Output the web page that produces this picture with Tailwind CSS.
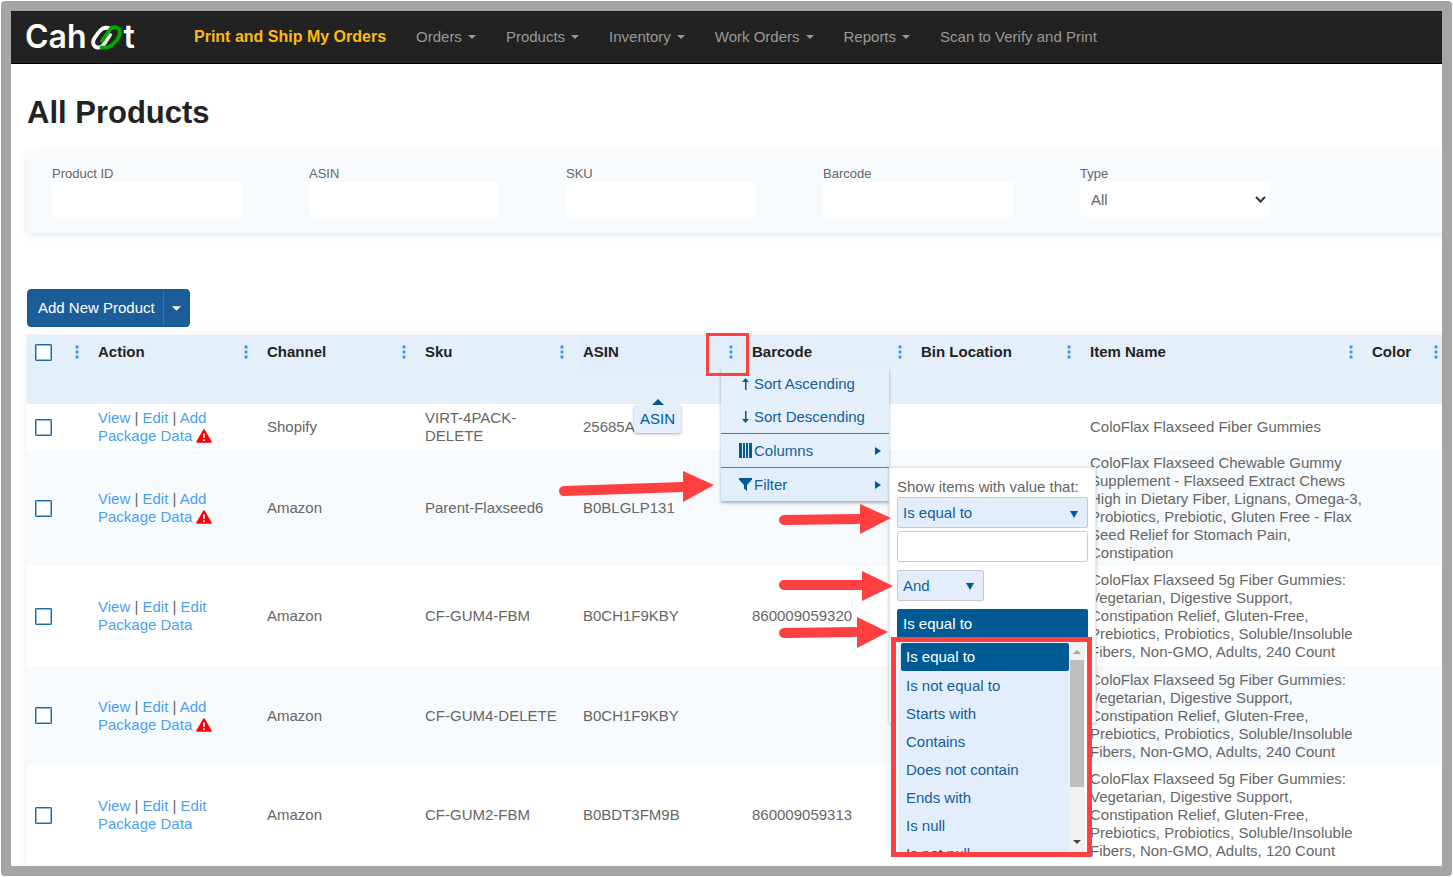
<!DOCTYPE html>
<html lang="en">
<head>
  <meta charset="UTF-8" />
  <meta name="viewport" content="width=device-width, initial-scale=1.0"/>
  <title>All Products - Cahoot</title>
  <script src="https://cdn.jsdelivr.net/npm/@tailwindcss/browser@4"></script>
</head>
<body class="bg-white p-px font-['Liberation_Sans',Arial,sans-serif] text-[15px] leading-[18px] text-[#666]">

<!-- icons used more than once -->
<svg class="hidden">
  <symbol id="dots" viewBox="0 0 4 14"><circle cx="2" cy="2" r="1.7"/><circle cx="2" cy="7" r="1.7"/><circle cx="2" cy="12" r="1.7"/></symbol>
  <symbol id="caret" viewBox="0 0 8 4"><path d="M0 0h8L4 4z"/></symbol>
  <symbol id="warn" viewBox="0 0 16 14"><path d="M8 1 15 13H1z" fill="#f00" stroke="#f00" stroke-width="1.5" stroke-linejoin="round"/><path d="M8 4.5v4.2M8 10.3v1.7" stroke="#fff" stroke-width="1.8"/></symbol>
</svg>

<div class="overflow-hidden rounded-[4px] border-[10px] border-[#a5a5a5]">

  <!-- top bar -->
  <nav class="flex h-[53px] items-center border-b border-black bg-[#222] pl-[14px] text-[#999]">
    <a href="#" class="flex w-[169px] shrink-0 items-center font-['Inter',sans-serif] text-[32px] leading-[40px] font-semibold text-white" aria-label="Cahoot">
      <span>Cah</span>
      <svg class="mr-[2px] ml-1 h-[25px] w-[31px]" viewBox="0 0 31 25" fill="none" stroke-width="3.8" stroke-linecap="round">
        <path d="M19 3.500C14 1.500 10.500 3.500 8 7L3.500 13C0 19 4 23 8 22.500C12 22 13 19 19 10" stroke="#fff"/>
        <path d="M11 16L18 6C20 2 25 1 28 4C30.500 8 28 12 26 15L21 20C18 23 14 23 10.500 22.500" stroke="#0a0"/>
      </svg>
      <span>t</span>
    </a>
    <div class="flex items-center gap-[30px] whitespace-nowrap">
      <a href="#" class="text-[16px] font-bold text-[#fdb913]">Print and Ship My Orders</a>
      <a href="#" class="flex items-center gap-[6px]">Orders <svg class="h-1 w-2 fill-current"><use href="#caret"/></svg></a>
      <a href="#" class="flex items-center gap-[6px]">Products <svg class="h-1 w-2 fill-current"><use href="#caret"/></svg></a>
      <a href="#" class="flex items-center gap-[6px]">Inventory <svg class="h-1 w-2 fill-current"><use href="#caret"/></svg></a>
      <a href="#" class="flex items-center gap-[6px]">Work Orders <svg class="h-1 w-2 fill-current"><use href="#caret"/></svg></a>
      <a href="#" class="flex items-center gap-[6px]">Reports <svg class="h-1 w-2 fill-current"><use href="#caret"/></svg></a>
      <a href="#">Scan to Verify and Print</a>
    </div>
  </nav>

  <main class="pb-px pl-4">
    <h1 class="pt-[29px] text-[31px] leading-[40px] font-bold text-[#222]">All Products</h1>

    <!-- search fields -->
    <form class="-mr-4 mt-[19px] flex gap-[67px] rounded-[4px] bg-[#f6fafd] pt-[14px] pb-4 pl-[25px] text-[13px] leading-4 shadow-[0_2px_8px_rgba(0,0,0,0.1)]">
      <div class="w-[190px]"><label for="pid" class="block">Product ID</label><input id="pid" class="block h-[35px] w-full rounded-[4px] bg-white px-3"></div>
      <div class="w-[190px]"><label for="asin" class="block">ASIN</label><input id="asin" class="block h-[35px] w-full rounded-[4px] bg-white px-3"></div>
      <div class="w-[190px]"><label for="sku" class="block">SKU</label><input id="sku" class="block h-[35px] w-full rounded-[4px] bg-white px-3"></div>
      <div class="w-[190px]"><label for="barcode" class="block">Barcode</label><input id="barcode" class="block h-[35px] w-full rounded-[4px] bg-white px-3"></div>
      <div class="relative w-[190px]"><label for="type" class="block">Type</label>
        <select id="type" class="block h-[35px] w-full appearance-none rounded-[4px] bg-white px-[11px] text-[15px]"><option>All</option></select>
        <svg class="pointer-events-none absolute right-1 bottom-[14px] h-[7px] w-[11px]" viewBox="0 0 11 7" fill="none" stroke="#333" stroke-width="2"><path d="M1 1l4.500 4.500L10 1"/></svg>
      </div>
    </form>

    <div class="mt-14 flex h-[38px] w-fit overflow-hidden rounded-[4px] border border-[#1a5796] bg-[#1b5c99] text-white">
      <button class="pr-2 pl-[10px]">Add New Product</button>
      <button class="flex w-[26px] items-center justify-center border-l border-[#3672a8]" aria-label="More"><svg class="h-[5px] w-[9px] fill-current"><use href="#caret"/></svg></button>
    </div>

    <div class="relative mt-2 shadow-[0_0_10px_rgba(0,0,0,0.08)]">
      <table class="w-full min-w-[1426px] table-fixed text-left [&_td]:py-1 [&_td]:pl-1">
        <colgroup>
          <col class="w-[67px]"><col class="w-[169px]"><col class="w-[158px]"><col class="w-[158px]"><col class="w-[169px]"><col class="w-[169px]"><col class="w-[169px]"><col class="w-[282px]"><col>
        </colgroup>
        <thead>
          <tr class="h-[69px] bg-[#e5effa] align-top text-[#222] [&_svg]:h-[14px] [&_svg]:w-1 [&_svg]:fill-[#3b99fc] [&_th>div]:flex [&_th>div]:h-[34px] [&_th>div]:items-center [&_th>div]:justify-between [&_th>div]:pr-[15px] [&_th>div]:pl-1">
            <th><div><input type="checkbox" aria-label="Select all" class="ml-1 size-[17px] appearance-none rounded-[1px] border-[1px] border-[#1b6ba3] bg-white shadow-[inset_0_0_0_1px_#8fb9d6]"><button aria-label="Column menu"><svg><use href="#dots"/></svg></button></div></th>
            <th><div>Action<button aria-label="Column menu"><svg><use href="#dots"/></svg></button></div></th>
            <th><div>Channel<button aria-label="Column menu"><svg><use href="#dots"/></svg></button></div></th>
            <th><div>Sku<button aria-label="Column menu"><svg><use href="#dots"/></svg></button></div></th>
            <th><div class="bg-[#e2edfb]">ASIN<button aria-label="Column menu"><svg><use href="#dots"/></svg></button></div></th>
            <th><div>Barcode<button aria-label="Column menu"><svg><use href="#dots"/></svg></button></div></th>
            <th><div>Bin Location<button aria-label="Column menu"><svg><use href="#dots"/></svg></button></div></th>
            <th><div>Item Name<button aria-label="Column menu"><svg><use href="#dots"/></svg></button></div></th>
            <th><div>Color<button aria-label="Column menu"><svg><use href="#dots"/></svg></button></div></th>
          </tr>
        </thead>
        <tbody class="[&_a]:text-[#4a9ff5] [&_input]:ml-1 [&_input]:block [&_input]:size-[17px] [&_input]:appearance-none [&_input]:rounded-[1px] [&_input]:border [&_input]:border-[#1b6ba3] [&_input]:bg-white [&_input]:shadow-[inset_0_0_0_1px_#8fb9d6] [&_svg]:inline [&_svg]:h-[14px] [&_svg]:w-4 [&_svg]:align-[-2px]">
          <tr class="h-[46px]">
            <td><input type="checkbox" aria-label="Select row"></td>
            <td><a href="#">View</a> | <a href="#">Edit</a> | <a href="#">Add<br>Package Data</a> <svg><use href="#warn"/></svg></td>
            <td>Shopify</td><td>VIRT-4PACK-<br>DELETE</td><td>25685A7</td><td></td><td></td>
            <td>ColoFlax Flaxseed Fiber Gummies</td><td></td>
          </tr>
          <tr class="h-[116px] bg-[#f6fafd]">
            <td><input type="checkbox" aria-label="Select row"></td>
            <td><a href="#">View</a> | <a href="#">Edit</a> | <a href="#">Add<br>Package Data</a> <svg><use href="#warn"/></svg></td>
            <td>Amazon</td><td>Parent-Flaxseed6</td><td>B0BLGLP131</td><td></td><td></td>
            <td>ColoFlax Flaxseed Chewable Gummy Supplement - Flaxseed Extract Chews High in Dietary Fiber, Lignans, Omega-3, Probiotics, Prebiotic, Gluten Free - Flax Seed Relief for Stomach Pain, Constipation</td><td></td>
          </tr>
          <tr class="h-[100px]">
            <td><input type="checkbox" aria-label="Select row"></td>
            <td><a href="#">View</a> | <a href="#">Edit</a> | <a href="#">Edit<br>Package Data</a></td>
            <td>Amazon</td><td>CF-GUM4-FBM</td><td>B0CH1F9KBY</td><td>860009059320</td><td></td>
            <td>ColoFlax Flaxseed 5g Fiber Gummies: Vegetarian, Digestive Support, Constipation Relief, Gluten-Free, Prebiotics, Probiotics, Soluble/Insoluble Fibers, Non-GMO, Adults, 240 Count</td><td></td>
          </tr>
          <tr class="h-[99px] bg-[#f6fafd]">
            <td><input type="checkbox" aria-label="Select row"></td>
            <td><a href="#">View</a> | <a href="#">Edit</a> | <a href="#">Add<br>Package Data</a> <svg><use href="#warn"/></svg></td>
            <td>Amazon</td><td>CF-GUM4-DELETE</td><td>B0CH1F9KBY</td><td></td><td></td>
            <td>ColoFlax Flaxseed 5g Fiber Gummies: Vegetarian, Digestive Support, Constipation Relief, Gluten-Free, Prebiotics, Probiotics, Soluble/Insoluble Fibers, Non-GMO, Adults, 240 Count</td><td></td>
          </tr>
          <tr class="h-[100px]">
            <td><input type="checkbox" aria-label="Select row"></td>
            <td><a href="#">View</a> | <a href="#">Edit</a> | <a href="#">Edit<br>Package Data</a></td>
            <td>Amazon</td><td>CF-GUM2-FBM</td><td>B0BDT3FM9B</td><td>860009059313</td><td></td>
            <td>ColoFlax Flaxseed 5g Fiber Gummies: Vegetarian, Digestive Support, Constipation Relief, Gluten-Free, Prebiotics, Probiotics, Soluble/Insoluble Fibers, Non-GMO, Adults, 120 Count</td><td></td>
          </tr>
        </tbody>
      </table>

      <!-- tooltip -->
      <div class="absolute top-[64px] left-[607px] flex flex-col items-center text-[#005b94]">
        <svg class="h-[6px] w-3 fill-current" viewBox="0 0 12 6"><path d="M0 6 6 0l6 6z"/></svg>
        <div class="rounded-[3px] bg-[#e3edfb] px-[6px] py-[5px] shadow-[0_1px_3px_rgba(0,0,0,0.35)]">ASIN</div>
      </div>

      <!-- column menu -->
      <div class="absolute top-[32px] left-[694px] w-[168px] bg-[#e5effa] text-[#10609a] shadow-[0_2px_3px_rgba(0,0,0,0.3)] [&>button]:flex [&>button]:w-full [&>button]:items-center [&>button]:pr-2 [&>button]:pl-[18px] [&_span]:flex-1 [&_span]:text-left [&_svg]:fill-[#005b94]">
        <button class="h-[33px]"><svg class="mr-[2px] h-3 w-[13px]" viewBox="0 0 13 12"><path d="M6 12V4H3L6.500 0 10 4H7.500v8z"/></svg><span>Sort Ascending</span></button>
        <button class="h-[33px]"><svg class="mr-[2px] h-3 w-[13px]" viewBox="0 0 13 12"><path d="M6 0v8H3l3.500 4L10 8H7.500V0z"/></svg><span>Sort Descending</span></button>
        <button class="h-[34px] border-t border-[#5f7488]"><svg class="mr-[2px] h-[15px] w-[13px]" viewBox="0 0 13 15"><path d="M0 0h3v15H0zM4 0h2v15H4zM7 0h2v15H7zM10 0h3v15h-3z"/></svg><span>Columns</span><svg class="h-2 w-[6px]" viewBox="0 0 6 8"><path d="M0 0l6 4-6 4z"/></svg></button>
        <button class="h-[34px] border-t border-[#5f7488] bg-[#e2edfc]"><svg class="mr-[2px] h-[13px] w-[13px]" viewBox="0 0 13 13"><path d="M0 0h13v1.500L8 7v6l-3-2.500V7L0 1.500z"/></svg><span>Filter</span><svg class="h-2 w-[6px]" viewBox="0 0 6 8"><path d="M0 0l6 4-6 4z"/></svg></button>
      </div>

      <!-- filter panel -->
      <div class="absolute top-[132px] left-[862px] h-[256px] w-[207px] border border-[#dfeafa] bg-white px-[7px] pt-[10px] shadow-[0_1px_3px_rgba(0,0,0,0.25)]">
        <label for="op1" class="block whitespace-nowrap">Show items with value that:</label>
        <div class="relative mt-px">
          <select id="op1" class="block h-[31px] w-full appearance-none rounded-[2px] border border-[#c5cbd3] bg-[#e3edfb] px-[5px] text-[#10609a]"><option>Is equal to</option></select>
          <svg class="pointer-events-none absolute top-[14px] right-[10px] h-[7px] w-2 fill-[#005b94]" viewBox="0 0 8 7"><path d="M0 0h8L4 7z"/></svg>
        </div>
        <input aria-label="Value" class="mt-[3px] block h-[31px] w-full rounded-[2px] border border-[#ccc] bg-white px-[5px]">
        <div class="relative mt-2 w-[87px]">
          <select aria-label="Logic" class="block h-[31px] w-full appearance-none rounded-[2px] border border-[#c5cbd3] bg-[#e3edfb] px-[5px] text-[#10609a]"><option>And</option></select>
          <svg class="pointer-events-none absolute top-[13px] right-[10px] h-[7px] w-2 fill-[#005b94]" viewBox="0 0 8 7"><path d="M0 0h8L4 7z"/></svg>
        </div>
        <select aria-label="Second operator" class="mt-2 block h-[29px] w-full appearance-none rounded-t-[2px] bg-[#005b94] px-[6px] text-white"><option>Is equal to</option></select>
        <div class="mt-[47px] h-7 w-2 bg-[#005b94]"></div>
      </div>

      <!-- operator list -->
      <div class="absolute top-[302px] left-[864px] flex h-[220px] w-[201px] overflow-hidden border-[5px] border-[#ff4040] bg-white pr-[2px] pl-[2px]">
        <ul class="h-full flex-1 overflow-hidden bg-[#e3edfb] pt-px pl-[3px] text-[#10609a] [&_li]:h-7 [&_li]:px-[5px] [&_li]:leading-7" role="listbox">
          <li class="mb-px rounded-[2px] bg-[#005b94] text-white" role="option" aria-selected="true">Is equal to</li>
          <li role="option">Is not equal to</li>
          <li role="option">Starts with</li>
          <li role="option">Contains</li>
          <li role="option">Does not contain</li>
          <li role="option">Ends with</li>
          <li role="option">Is null</li>
          <li role="option">Is not null</li>
        </ul>
        <div class="flex w-4 flex-col items-center bg-[#f1f1f1]">
          <svg class="mt-2 h-1 w-2 fill-[#a0a0a0]" viewBox="0 0 8 4"><path d="M0 4l4-4 4 4z"/></svg>
          <div class="mt-[6px] h-[127px] w-[14px] bg-[#bfbfbf]"></div>
          <svg class="mt-auto mb-2 h-1 w-2 fill-[#444]"><use href="#caret"/></svg>
        </div>
      </div>

      <!-- callouts -->
      <div class="absolute -top-[2px] left-[679px] h-[43px] w-[43px] border-[3px] border-[#ff4040]"></div>
      <svg class="pointer-events-none absolute top-0 left-0 h-[330px] w-[900px] fill-[#ff4040] stroke-[#ff4040]" viewBox="0 0 900 330">
        <g stroke-width="10" stroke-linecap="round"><path d="M537 156l119-4M757 185l74-1M757 250h76M757 298l71-1"/></g>
        <path stroke="none" d="M656 136l31 14-31 17zM833 169l31 14-31 16zM835 236l31 15-31 15zM830 282l31 15-31 16z"/>
      </svg>
    </div>
  </main>
</div>

</body>
</html>
